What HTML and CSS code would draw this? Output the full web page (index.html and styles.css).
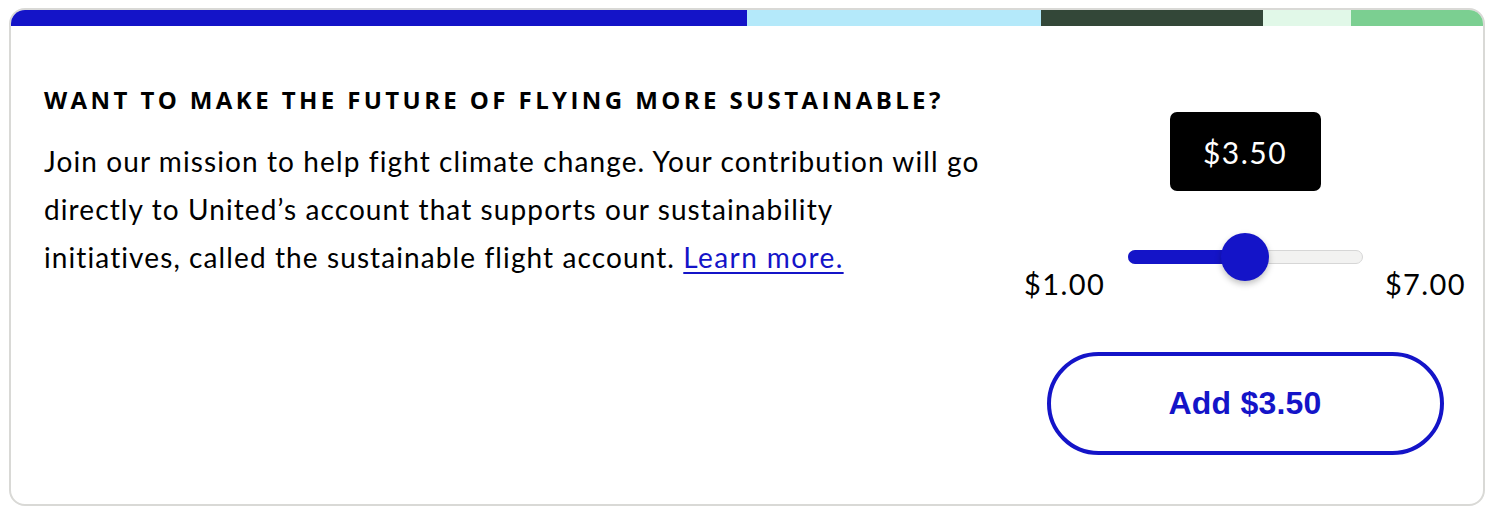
FILE: index.html
```html
<!DOCTYPE html>
<html>
<head>
<meta charset="utf-8">
<link rel="stylesheet" href="styles.css">
</head>
<body>
<div class="card">
  <div class="stripe">
    <span class="seg seg-blue"></span>
    <span class="seg seg-sky"></span>
    <span class="seg seg-forest"></span>
    <span class="seg seg-mint"></span>
    <span class="seg seg-green"></span>
  </div>
  <div class="content">
    <div class="text">
      <h2 class="title">WANT TO MAKE THE FUTURE OF FLYING MORE SUSTAINABLE?</h2>
      <p class="body">Join our mission to help fight climate change. Your contribution will go<br>directly to United’s account that supports our sustainability<br>initiatives, called the sustainable flight account. <a href="#" class="link">Learn more.</a></p>
    </div>
    <div class="picker">
      <div class="bubble">$3.50</div>
      <div class="range-row">
        <span class="range-label">$1.00</span>
        <div class="track">
          <div class="fill" style="width: 50%"></div>
          <div class="thumb" style="left: 50%"></div>
        </div>
        <span class="range-label">$7.00</span>
      </div>
      <button class="add-btn">Add $3.50</button>
    </div>
  </div>
</div>
</body>
</html>
```
FILE: styles.css
```css
* { box-sizing: border-box; }
html, body { margin: 0; padding: 0; background: #fff; }
body { padding: 8px 13px 4px 9px; }

.card {
  border: 2px solid #d9d9d6;
  border-radius: 16px;
  overflow: hidden;
  height: 498px;
  background: #fff;
}

.stripe { display: flex; height: 16px; }
.seg { display: block; height: 100%; }
.seg-blue { flex: 736 0 0; background: #1414c8; }
.seg-sky { flex: 294 0 0; background: #b4e9fa; }
.seg-forest { flex: 222 0 0; background: #334738; }
.seg-mint { flex: 88 0 0; background: #e1f8e8; }
.seg-green { flex: 132 0 0; background: #7bcf91; }

.content {
  display: flex;
  justify-content: space-between;
  padding: 0 17px 0 33px;
}

.text { padding-top: 59px; }

.title {
  margin: 0;
  font-family: "Open Sans", sans-serif;
  font-weight: 700;
  font-size: 24px;
  letter-spacing: 3.4px;
  line-height: 30px;
  color: #000;
  white-space: nowrap;
}

.body {
  margin: 22px 0 0;
  font-family: Lato, sans-serif;
  font-size: 28px;
  letter-spacing: 1.1px;
  line-height: 48px;
  color: #000;
  white-space: nowrap;
}

.link { color: #1414c8; text-decoration: underline; text-underline-offset: 4px; text-decoration-thickness: 2px; letter-spacing: 1.4px; }

.picker {
  width: 442px;
  display: flex;
  flex-direction: column;
  align-items: center;
  padding-top: 86px;
}

.bubble {
  width: 151px;
  height: 79px;
  background: #000;
  color: #fff;
  border-radius: 7px;
  display: flex;
  align-items: center;
  justify-content: center;
  font-family: Lato, sans-serif;
  font-size: 30px;
  letter-spacing: 1.5px;
}

.range-row {
  width: 100%;
  display: flex;
  align-items: flex-end;
  justify-content: space-between;
  margin-top: 41px;
  height: 69px;
}

.range-label {
  font-family: Lato, sans-serif;
  font-size: 29px;
  letter-spacing: 1.4px;
  line-height: 34px;
  color: #000;
}

.track {
  position: relative;
  align-self: flex-start;
  margin-top: 18px;
  width: 235px;
  height: 14px;
  border-radius: 7px;
  background: #f2f2f1;
  border: 1px solid #d6d6d6;
}

.fill {
  position: absolute;
  left: -1px; top: -1px; bottom: -1px;
  background: #1414c8;
  border-radius: 7px;
}

.thumb {
  position: absolute;
  top: 50%;
  width: 48px;
  height: 48px;
  margin: -24px 0 0 -24px;
  border-radius: 50%;
  background: #1414c8;
  box-shadow: 0 3px 6px rgba(0,0,0,0.25);
}

.add-btn {
  margin-top: 51px;
  width: 397px;
  height: 103px;
  border: 4px solid #1414c8;
  border-radius: 52px;
  background: #fff;
  color: #1414c8;
  font-family: "Liberation Sans", Arial, sans-serif;
  font-weight: 700;
  font-size: 32px;
  letter-spacing: 0.2px;
}
```
